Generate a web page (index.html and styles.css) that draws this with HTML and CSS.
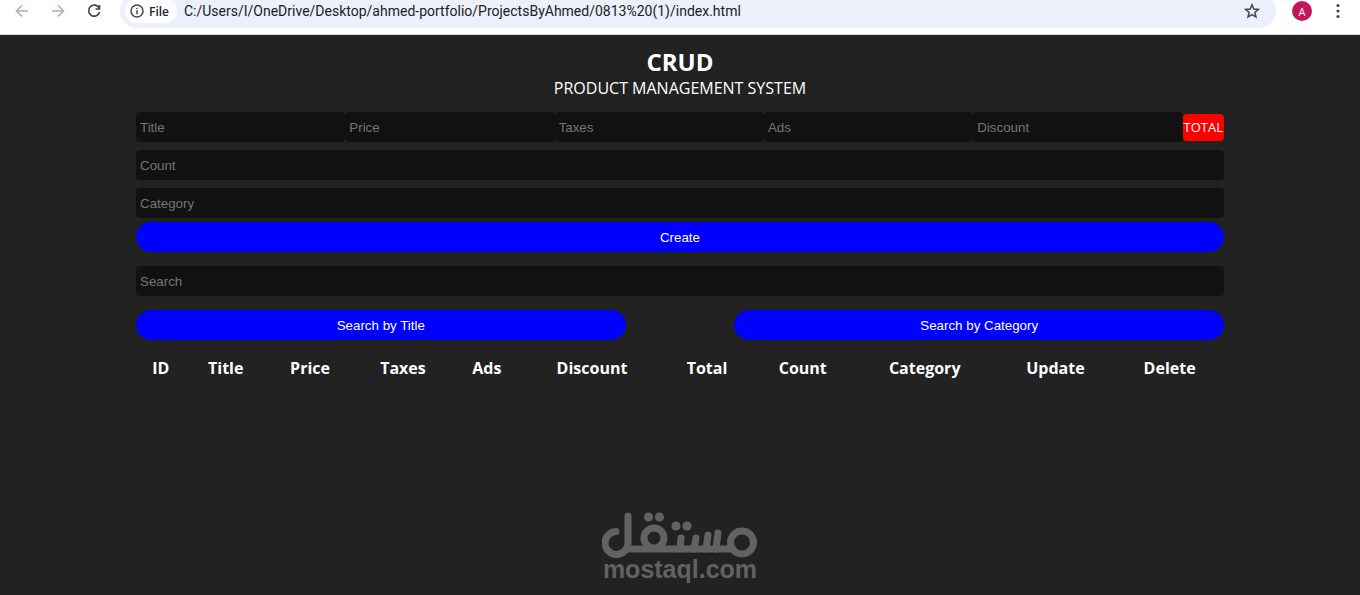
FILE: index.html
```html
<!DOCTYPE html>
<html lang="en">
<head>
    <meta charset="UTF-8">
    <meta name="viewport" content="width=device-width, initial-scale=1.0">
    <title>CRUD</title>
    <link rel="stylesheet" href="styles.css">
</head>
<body>
    <header class="toolbar">
        <div class="nav">
            <button type="button" aria-label="Back" disabled>
                <svg width="16" height="16" viewBox="0 0 16 16"><path d="M14 8H3M8 2.500L2.500 8L8 13.500"/></svg>
            </button>
            <button type="button" aria-label="Forward" disabled>
                <svg width="16" height="16" viewBox="0 0 16 16"><path d="M2 8H13M8 2.500L13.500 8L8 13.500"/></svg>
            </button>
            <button type="button" aria-label="Reload">
                <svg width="16" height="16" viewBox="0 0 16 16"><path d="M13 5A5.500 5.500 0 1 0 13.500 9M13.500 2V6H9.500"/></svg>
            </button>
        </div>
        <div class="address">
            <button type="button" class="chip">
                <svg width="14" height="14" viewBox="0 0 14 14"><circle cx="7" cy="7" r="6"/><path d="M7 6.200V10.200M7 3.700V5"/></svg>
                File
            </button>
            <input type="text" class="url" aria-label="Address" value="C:/Users/I/OneDrive/Desktop/ahmed-portfolio/ProjectsByAhmed/0813%20(1)/index.html">
            <button type="button" class="star" aria-label="Bookmark">
                <svg width="16" height="16" viewBox="0 0 16 16"><path d="M8 1.800L9.800 6L14.400 6.400L10.900 9.400L12 13.900L8 11.500L4 13.900L5.100 9.400L1.600 6.400L6.200 6Z"/></svg>
            </button>
        </div>
        <button type="button" class="avatar">A</button>
        <button type="button" class="dots" aria-label="Menu">
            <svg width="16" height="16" viewBox="0 0 16 16"><circle cx="8" cy="2.500" r="1.600"/><circle cx="8" cy="8" r="1.600"/><circle cx="8" cy="13.500" r="1.600"/></svg>
        </button>
    </header>

    <main class="crud">
        <div class="head">
            <h1>CRUD</h1>
            <p>PRODUCT MANAGEMENT SYSTEM</p>
        </div>

        <div class="inputs">
            <div class="price">
                <input type="text" id="title" placeholder="Title" aria-label="Title">
                <input type="text" id="price" placeholder="Price" aria-label="Price">
                <input type="text" id="taxes" placeholder="Taxes" aria-label="Taxes">
                <input type="text" id="ads" placeholder="Ads" aria-label="Ads">
                <input type="text" id="discount" placeholder="Discount" aria-label="Discount">
                <small id="total">TOTAL</small>
            </div>
            <input type="text" id="count" placeholder="Count" aria-label="Count">
            <input type="text" id="category" placeholder="Category" aria-label="Category">
            <button type="button" class="btn" id="submit">Create</button>
        </div>

        <div class="search">
            <input type="text" id="search" placeholder="Search" aria-label="Search">
            <div class="btn-search">
                <button type="button" class="btn" id="searchTitle">Search by Title</button>
                <button type="button" class="btn" id="searchCategory">Search by Category</button>
            </div>
        </div>

        <table>
            <thead>
                <tr>
                    <th>ID</th>
                    <th>Title</th>
                    <th>Price</th>
                    <th>Taxes</th>
                    <th>Ads</th>
                    <th>Discount</th>
                    <th>Total</th>
                    <th>Count</th>
                    <th>Category</th>
                    <th>Update</th>
                    <th>Delete</th>
                </tr>
            </thead>
            <tbody id="tbody"></tbody>
        </table>
    </main>

    <footer class="mark">
        <svg width="156" height="46" viewBox="0 0 156 46">
            <path class="line" d="M14 19.500A11.500 11.500 0 1 0 26 31V4M24 37H131"/>
            <circle class="line" cx="52" cy="26" r="10"/>
            <circle class="line" cx="140" cy="30.500" r="11.500"/>
            <path class="line" d="M78 37L79 26M92 37L94 26M104 37L106 23M114 37L116 21"/>
            <circle cx="46.500" cy="5" r="4.600"/>
            <circle cx="57.500" cy="5" r="4.600"/>
            <circle cx="74" cy="14" r="4.600"/>
            <circle cx="85" cy="14" r="4.600"/>
        </svg>
        <span>mostaql.com</span>
    </footer>
</body>
</html>
```
FILE: styles.css
```css
* {
    box-sizing: border-box;
}

body {
    margin: 0;
    min-height: 100vh;
    display: flex;
    flex-direction: column;
    background-color: #222;
    color: white;
    font-family: "Segoe UI", "Open Sans", sans-serif;
}

button {
    font-family: inherit;
    border: none;
    padding: 0;
    background: none;
    cursor: pointer;
}

/* browser bar */
.toolbar {
    display: flex;
    align-items: center;
    height: 35px;
    padding: 0 14px;
    background-color: white;
    border-bottom: 1px solid #dadce0;
    overflow: hidden;
}

.toolbar svg {
    display: block;
    fill: none;
    stroke: #474747;
    stroke-width: 1.7;
}

.nav {
    display: flex;
    gap: 20px;
    width: 106px;
    padding-bottom: 12px;
}

.nav button:disabled svg {
    stroke: #b5afb3;
}

.address {
    flex: 1;
    display: flex;
    align-items: center;
    height: 34px;
    margin-bottom: 12px;
    padding: 0 16px 0 5px;
    border-radius: 17px;
    background-color: #ebf0fa;
}

.chip {
    display: flex;
    align-items: center;
    gap: 5px;
    height: 24px;
    padding: 0 8px 0 5px;
    border-radius: 12px;
    background-color: white;
    color: #222;
    font-size: 12px;
    font-weight: 600;
}

.toolbar .chip svg {
    stroke-width: 1.5;
}

.url {
    flex: 1;
    padding: 0 7px;
    border: none;
    background: none;
    color: #202124;
    font-family: "Segoe UI", Roboto, sans-serif;
    font-size: 14px;
    outline: none;
}

.toolbar .star svg {
    stroke-width: 1.5;
}

.avatar {
    width: 20px;
    height: 20px;
    margin: 0 18px 12px 16px;
    border-radius: 50%;
    background-color: #c2185b;
    color: white;
    font-size: 11px;
}

.dots {
    padding-bottom: 12px;
}

.toolbar .dots svg {
    fill: #474747;
    stroke: none;
}

/* page */
.crud {
    width: 80%;
    margin: 0 auto;
}

.head {
    padding: 11px 0 9px;
    text-align: center;
}

h1 {
    margin: 0;
    font-size: 24px;
    line-height: 32px;
}

.head p {
    margin: 0;
    font-size: 16px;
    line-height: 21px;
}

.crud input {
    display: block;
    width: 100%;
    height: 30px;
    margin: 4px 0;
    padding: 4px;
    border: none;
    border-radius: 4px;
    outline: none;
    background-color: #111;
    color: white;
    font-family: "Liberation Sans", Arial, sans-serif;
}

.crud input::placeholder {
    color: #757575;
}

.inputs .price {
    display: flex;
    align-items: center;
    margin-bottom: 4px;
}

.price input {
    flex: 1;
    min-width: 0;
}

#total {
    padding: 4px 1px;
    border-radius: 4px;
    background-color: red;
    font-size: 13px;
    line-height: 19px;
}

.inputs input {
    margin-bottom: 8px;
}

.inputs .price input,
.inputs #category {
    margin-bottom: 4px;
}

.btn {
    display: block;
    width: 100%;
    height: 30px;
    border-radius: 20px;
    background-color: blue;
    color: white;
    font-family: "Liberation Sans", Arial, sans-serif;
}

.search #search {
    margin: 14px 0;
}

.btn-search {
    display: flex;
    justify-content: space-between;
}

.btn-search .btn {
    width: 45%;
}

table {
    width: 100%;
    margin-top: 16px;
    border-collapse: collapse;
}

th {
    padding: 2px 6px;
    font-size: 16px;
    line-height: 21px;
    text-align: center;
}

/* watermark */
.mark {
    display: flex;
    flex-direction: column;
    align-items: center;
    margin-top: auto;
    padding-bottom: 14px;
    color: #616361;
    font-family: "Liberation Sans", Arial, sans-serif;
    font-size: 25px;
    font-weight: bold;
    line-height: 23px;
}

.mark svg {
    fill: #616361;
}

.mark .line {
    fill: none;
    stroke: #616361;
    stroke-width: 7;
    stroke-linecap: round;
    stroke-linejoin: round;
}
```
